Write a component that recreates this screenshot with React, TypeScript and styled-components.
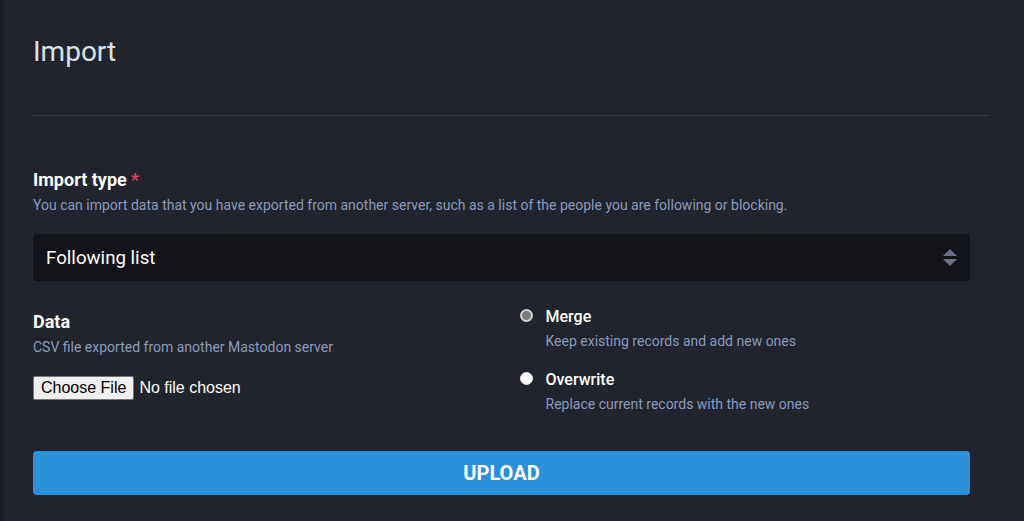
import React from "react";
import styled, { createGlobalStyle } from "styled-components";

const GlobalStyle = createGlobalStyle`
  body {
    margin: 0;
    background: #21242c;
    font-family: Roboto, "Liberation Sans", sans-serif;
  }
`;

const Page = styled.div`
  min-height: 100vh;
  border-left: 4px solid #1b1e25;
  padding: 34px 36px 0 29px;
  box-sizing: border-box;
`;

const Title = styled.h2`
  margin: 0;
  font-size: 28px;
  line-height: 36px;
  font-weight: 400;
  color: #d9e1e8;
`;

const Divider = styled.hr`
  border: 0;
  height: 1px;
  background: #373c49;
  margin: 45px 0 0;
`;

const Form = styled.form`
  max-width: 937px;
  padding-top: 53px;
`;

const Label = styled.div`
  font-size: 18px;
  line-height: 22px;
  font-weight: 700;
  color: #ffffff;

  abbr {
    color: #df405a;
    text-decoration: none;
    margin-left: 4px;
  }
`;

const Hint = styled.div`
  margin-top: 5px;
  font-size: 14px;
  line-height: 18px;
  color: #8a9bbe;
`;

const SelectBox = styled.div`
  margin-top: 20px;
  height: 47px;
  background: #131419;
  border-radius: 4px;
  display: flex;
  align-items: center;
  padding: 0 13px;
  font-size: 18.7px;
  color: #ffffff;
`;

const Arrows = styled.svg`
  margin-left: auto;
`;

const Columns = styled.div`
  display: grid;
  grid-template-columns: 1fr 1fr;
  column-gap: 30px;
  margin-top: 24px;
`;

const LeftCol = styled.div`
  padding-top: 6px;
`;

const RightCol = styled.div`
  padding: 2px 0 0 3px;
  display: flex;
  flex-direction: column;
  gap: 20px;
`;

const FileRow = styled.label`
  display: flex;
  align-items: center;
  margin-top: 20px;
  font-family: "Liberation Sans", Arial, sans-serif;
  font-size: 16px;
  color: #ffffff;

  input {
    display: none;
  }
`;

const FileButton = styled.span`
  display: inline-flex;
  align-items: center;
  height: 24px;
  box-sizing: border-box;
  padding: 0 7px;
  margin-right: 5px;
  background: #efefef;
  color: #000000;
  border: 1px solid #767676;
  border-radius: 2px;
`;

const Option = styled.label`
  display: grid;
  grid-template-columns: 13px 1fr;
  column-gap: 13px;
  align-items: start;

  ${Hint} {
    grid-column: 2;
  }
`;

const Radio = styled.span<{ $checked?: boolean }>`
  width: 13px;
  height: 13px;
  margin-top: 2px;
  border-radius: 50%;
  box-sizing: border-box;
  background: ${(p) => (p.$checked ? "#7d7d7d" : "#ffffff")};
  border: ${(p) => (p.$checked ? "2px solid #d2d2d2" : "1px solid #e6e6e6")};
`;

const OptionLabel = styled.span`
  font-size: 16px;
  line-height: 20px;
  font-weight: 500;
  color: #ffffff;
`;

const UploadButton = styled.button`
  display: block;
  width: 100%;
  height: 44px;
  margin-top: 38px;
  border: 0;
  border-radius: 4px;
  background: #2b90d9;
  color: #ffffff;
  font-family: Roboto, "Liberation Sans", sans-serif;
  font-size: 20px;
  font-weight: 700;
  text-transform: uppercase;
  cursor: pointer;
`;

const options = [
  { label: "Merge", hint: "Keep existing records and add new ones", checked: true },
  { label: "Overwrite", hint: "Replace current records with the new ones", checked: false },
];

export default function App() {
  return (
    <>
      <GlobalStyle />
      <Page>
        <Title>Import</Title>
        <Divider />
        <Form onSubmit={(e) => e.preventDefault()}>
          <Label>
            Import type<abbr title="required">*</abbr>
          </Label>
          <Hint>
            You can import data that you have exported from another server, such as a list of the people you are following or blocking.
          </Hint>
          <SelectBox>
            Following list
            <Arrows width="14" height="17" viewBox="0 0 14 17">
              <path d="M7 0 L14 7 L0 7 Z" fill="#6b7185" />
              <path d="M0 10 L14 10 L7 17 Z" fill="#6b7185" />
            </Arrows>
          </SelectBox>
          <Columns>
            <LeftCol>
              <Label>Data</Label>
              <Hint>CSV file exported from another Mastodon server</Hint>
              <FileRow>
                <input type="file" />
                <FileButton>Choose File</FileButton>
                No file chosen
              </FileRow>
            </LeftCol>
            <RightCol>
              {options.map((o) => (
                <Option key={o.label}>
                  <Radio $checked={o.checked} />
                  <OptionLabel>{o.label}</OptionLabel>
                  <Hint>{o.hint}</Hint>
                </Option>
              ))}
            </RightCol>
          </Columns>
          <UploadButton type="submit">Upload</UploadButton>
        </Form>
      </Page>
    </>
  );
}
